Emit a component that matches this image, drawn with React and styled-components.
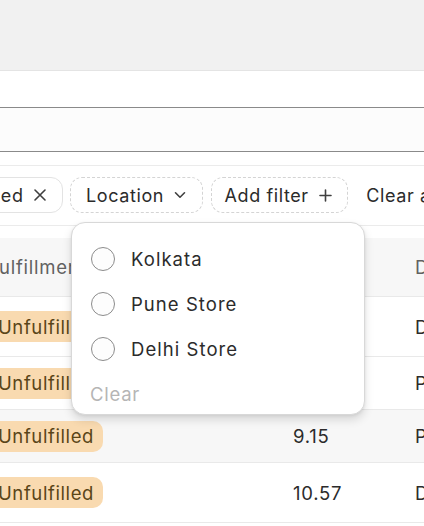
import React from "react";
import styled, { createGlobalStyle } from "styled-components";

const GlobalStyle = createGlobalStyle`
  html, body { margin: 0; padding: 0; background: #ffffff; }
  body {
    font-family: Inter, "Noto Sans", "DejaVu Sans", sans-serif;
    color: #2b2b2b;
    overflow: hidden;
  }
  * { box-sizing: border-box; }
`;

const Page = styled.div`
  position: relative;
  width: 424px;
  height: 526px;
  overflow: hidden;
  background: #ffffff;
  font-size: 18px;
  letter-spacing: 0.6px;
`;

const TopBar = styled.div`
  height: 71px;
  background: #f1f1f1;
  border-bottom: 1px solid #e4e4e4;
`;

const SearchArea = styled.div`
  padding: 36px 0 13px;
  border-bottom: 1px solid #ebebeb;
`;

const SearchField = styled.div`
  height: 45px;
  margin: 0 -20px;
  background: #fcfcfc;
  border-top: 1px solid #8a8a8a;
  border-bottom: 1px solid #8a8a8a;
`;

const FilterRow = styled.div`
  display: flex;
  align-items: center;
  gap: 7.5px;
  padding: 11px 0 12px;
  border-bottom: 1px solid #ebebeb;
  white-space: nowrap;
`;

const Chip = styled.button`
  flex-shrink: 0;
  display: inline-flex;
  align-items: center;
  gap: 10px;
  height: 36px;
  padding: 0 ${(p) => p.$pr || 16}px 0 ${(p) => p.$pl || 15}px;
  border-radius: 12px;
  border: 1px ${(p) => (p.$dashed ? "dashed #d4d4d4" : "solid #e3e3e3")};
  background: #ffffff;
  color: #2b2b2b;
  font: inherit;
  letter-spacing: inherit;
  margin-left: ${(p) => p.$offset || 0}px;
`;

const TextButton = styled.button`
  flex-shrink: 0;
  border: none;
  background: none;
  padding: 0;
  margin-left: 11px;
  font: inherit;
  letter-spacing: inherit;
  color: #2b2b2b;
`;

const Table = styled.div`
  margin-top: 12px;
  margin-left: -12px;
  width: 600px;
  font-size: 18.5px;
  letter-spacing: 0.75px;
`;

const Row = styled.div`
  display: grid;
  grid-template-columns: 305px 122px 1fr;
  align-items: center;
  height: ${(p) => p.$h}px;
  background: ${(p) => (p.$shaded ? "#f7f7f7" : "#ffffff")};
  border-bottom: 1px solid #e9e9e9;
  color: ${(p) => (p.$header ? "#616161" : "#2b2b2b")};
  white-space: nowrap;
`;

const Cell = styled.div`
  overflow: hidden;
`;

const Badge = styled.span`
  display: inline-flex;
  align-items: center;
  height: 31px;
  padding: 0 9px 0 10px;
  border-radius: 10px;
  background: #f9dab0;
  color: #5a4518;
  letter-spacing: 0.6px;
`;

const Popover = styled.div`
  position: absolute;
  left: 71px;
  top: 222px;
  width: 294px;
  height: 193px;
  padding-top: 13px;
  background: #ffffff;
  border: 1px solid #d8d8d8;
  border-radius: 14px;
  box-shadow: 0 5px 10px rgba(0, 0, 0, 0.13), 0 1px 3px rgba(0, 0, 0, 0.07);
  font-size: 18.5px;
`;

const Option = styled.label`
  display: flex;
  align-items: center;
  gap: 16px;
  height: 45px;
  padding-left: 19px;
  color: #2b2b2b;
  letter-spacing: 1.05px;
`;

const Radio = styled.span`
  width: 24px;
  height: 24px;
  border-radius: 50%;
  border: 1px solid #8c8c8c;
  background: #fdfdfd;
  flex-shrink: 0;
`;

const ClearOption = styled.div`
  display: flex;
  align-items: center;
  height: 45px;
  padding-left: 18px;
  color: #b5b5b5;
  letter-spacing: 0.75px;
`;

const Icon = styled.svg`
  flex-shrink: 0;
  display: block;
`;

const CloseIcon = () => (
  <Icon width="12" height="12" viewBox="0 0 12 12" fill="none">
    <path d="M1 1L11 11M11 1L1 11" stroke="#3f3f3f" strokeWidth="1.6" strokeLinecap="round" />
  </Icon>
);

const ChevronIcon = () => (
  <Icon width="12" height="8" viewBox="0 0 12 8" fill="none">
    <path d="M1.5 1.8L6 6.2L10.5 1.8" stroke="#3f3f3f" strokeWidth="1.6" strokeLinecap="round" strokeLinejoin="round" />
  </Icon>
);

const PlusIcon = () => (
  <Icon width="13" height="13" viewBox="0 0 13 13" fill="none">
    <path d="M6.5 1V12M1 6.5H12" stroke="#3f3f3f" strokeWidth="1.6" strokeLinecap="round" />
  </Icon>
);

const rows = [
  { status: "Unfulfilled", total: "12.40", method: "Delivery", h: 60 },
  { status: "Unfulfilled", total: "8.25", method: "Pickup", h: 53 },
  { status: "Unfulfilled", total: "9.15", method: "Pickup", h: 53, shaded: true },
  { status: "Unfulfilled", total: "10.57", method: "Delivery", h: 60 },
];

const locations = ["Kolkata", "Pune Store", "Delhi Store"];

export default function App() {
  return (
    <>
      <GlobalStyle />
      <Page>
        <TopBar />
        <SearchArea>
          <SearchField />
        </SearchArea>
        <FilterRow>
          <Chip $offset={-86}>
            Unfulfilled
            <CloseIcon />
          </Chip>
          <Chip $dashed>
            Location
            <ChevronIcon />
          </Chip>
          <Chip $dashed $pl={13} $pr={15}>
            Add filter
            <PlusIcon />
          </Chip>
          <TextButton>Clear all</TextButton>
        </FilterRow>
        <Table>
          <Row $header $h={59} $shaded>
            <Cell>Fulfillment status</Cell>
            <Cell>Total</Cell>
            <Cell>Delivery method</Cell>
          </Row>
          {rows.map((r, i) => (
            <Row key={i} $h={r.h} $shaded={r.shaded}>
              <Cell>
                <Badge>{r.status}</Badge>
              </Cell>
              <Cell>{r.total}</Cell>
              <Cell>{r.method}</Cell>
            </Row>
          ))}
        </Table>
        <Popover>
          {locations.map((l) => (
            <Option key={l}>
              <Radio />
              {l}
            </Option>
          ))}
          <ClearOption>Clear</ClearOption>
        </Popover>
      </Page>
    </>
  );
}
